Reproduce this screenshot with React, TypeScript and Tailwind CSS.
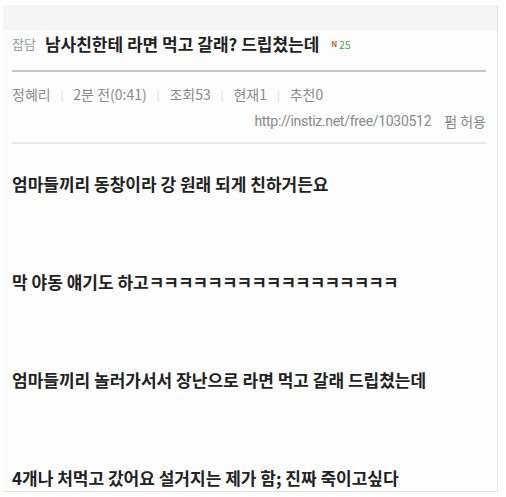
export default function App() {
  const font = { fontFamily: '"Noto Sans CJK KR", "Noto Sans", sans-serif' };
  const meta = ["정혜리", "2분 전(0:41)", "조회53", "현재1", "추천0"];
  const lines = [
    "엄마들끼리 동창이라 강 원래 되게 친하거든요",
    "막 야동 얘기도 하고",
    "엄마들끼리 놀러가서서 장난으로 라면 먹고 갈래 드립쳤는데",
    "4개나 처먹고 갔어요 설거지는 제가 함; 진짜 죽이고싶다",
  ];

  return (
    <div className="w-[506px] h-[497px] overflow-hidden bg-white pt-[5px] pl-[3px]" style={font}>
      <div className="w-[495px] h-[487px] border-r border-b border-[#e4e4e4] bg-[#fdfdfd]">
        <div className="h-[25px] bg-[#f5f5f5]" />
        <div className="px-[9px]">
          <div className="flex items-center h-[28px]">
            <span className="text-[13px] text-[#9a9a9a] mr-[9px]">잡담</span>
            <span className="text-[17px] font-bold text-[#222]">
              남사친한테 라면 먹고 갈래? 드립쳤는데
            </span>
            <span className="ml-[12px] text-[8px] font-bold text-[#e0552f]">N</span>
            <span className="ml-[2px] text-[10px] text-[#3aa64a]">25</span>
          </div>
          <div className="mt-[12px] mr-[2px] h-[2px] bg-[#c4c4c4]" />
          <div className="flex items-center h-[20px] mt-[12px] text-[14px] text-[#8a8a8a]">
            {meta.map((m, i) => (
              <span key={m} className="flex items-center">
                {i > 0 && <span className="mx-[10px] text-[10px] text-[#cfcfcf]">|</span>}
                {m}
              </span>
            ))}
          </div>
          <div className="flex justify-end items-center h-[20px] mt-[7px] mr-[2px] text-[14px] text-[#8a8a8a]">
            <span style={{ fontFamily: "Roboto, sans-serif" }} className="tracking-[-0.3px]">
              http://instiz.net/free/1030512
            </span>
            <span className="ml-[13px]">펌 허용</span>
          </div>
          <div className="mt-[11px] mr-[2px] h-[2px] bg-[#e8e8e8]" />
          <div className="pt-[28px] text-[17px] font-bold text-[#222]">
            {lines.map((l, i) => (
              <p key={i} className={`h-[24px] leading-[24px] whitespace-nowrap ${i > 0 ? "mt-[74px]" : ""}`}>
                {l}
                {i === 1 && <span className="tracking-[-1px]">ㅋㅋㅋㅋㅋㅋㅋㅋㅋㅋㅋㅋㅋㅋㅋㅋㅋ</span>}
              </p>
            ))}
          </div>
        </div>
      </div>
    </div>
  );
}
